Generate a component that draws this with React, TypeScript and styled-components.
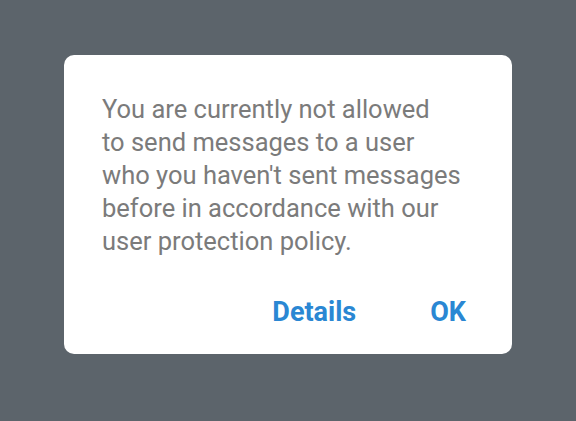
import React from "react";
import styled, { createGlobalStyle } from "styled-components";

const Global = createGlobalStyle`
  html, body { margin: 0; padding: 0; background: #5c646b; }
  body { width: 576px; height: 421px; overflow: hidden; font-family: Roboto, "Noto Sans", sans-serif; }
`;

const Screen = styled.div`
  display: flex;
  justify-content: center;
  padding-top: 55px;
  height: 421px;
  box-sizing: border-box;
`;

const Dialog = styled.div`
  width: 448px;
  height: 299px;
  box-sizing: border-box;
  background: #ffffff;
  border-radius: 10px;
  padding: 38px 40px 0 38px;
  display: flex;
  flex-direction: column;
`;

const Message = styled.p`
  margin: 0;
  font-size: 25.5px;
  line-height: 33px;
  color: #7b7b7b;
  white-space: pre-line;
`;

const Actions = styled.div`
  display: flex;
  justify-content: flex-end;
  gap: 74px;
  margin-top: 38px;
  padding-right: 6px;
`;

const ActionButton = styled.button`
  border: none;
  background: none;
  padding: 0;
  font-family: Roboto, "Noto Sans", sans-serif;
  font-weight: 700;
  font-size: 27px;
  line-height: 33px;
  color: #2a87d3;
  cursor: pointer;
`;

export default function App() {
  return (
    <>
      <Global />
      <Screen>
        <Dialog>
          <Message>
            {"You are currently not allowed\nto send messages to a user\nwho you haven't sent messages\nbefore in accordance with our\nuser protection policy."}
          </Message>
          <Actions>
            <ActionButton>Details</ActionButton>
            <ActionButton>OK</ActionButton>
          </Actions>
        </Dialog>
      </Screen>
    </>
  );
}
